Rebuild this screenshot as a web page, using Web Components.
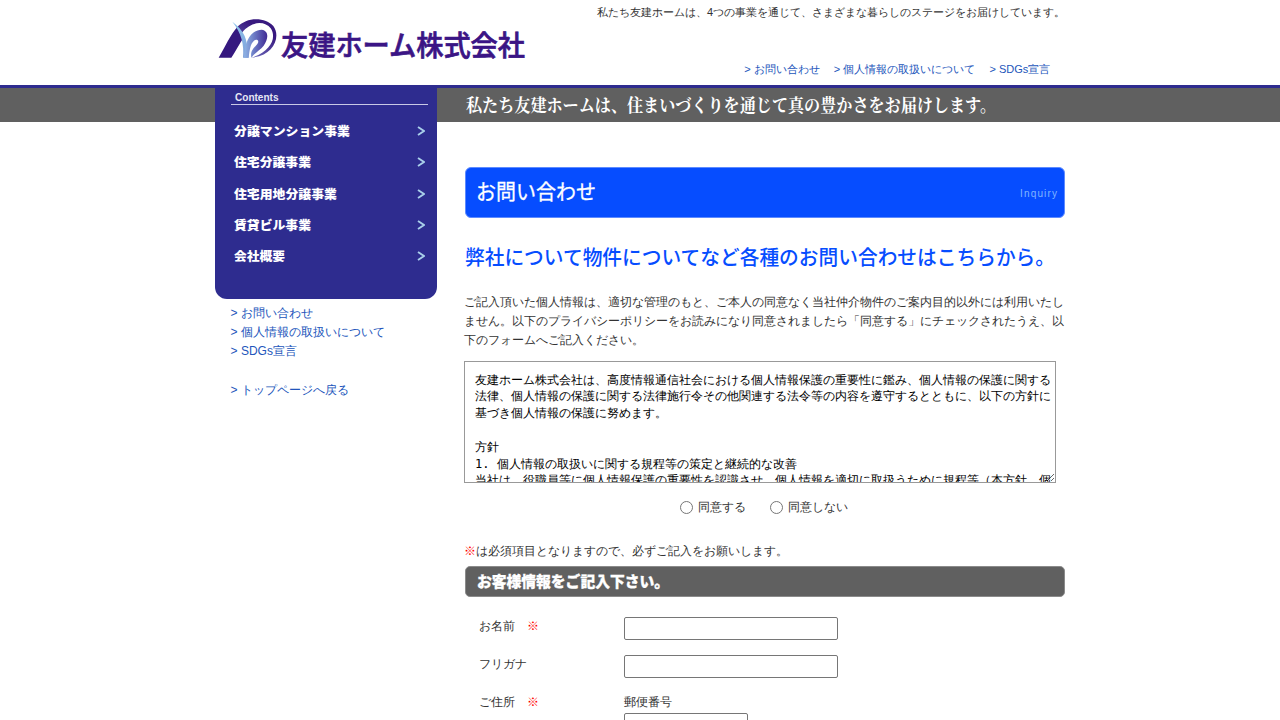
<!DOCTYPE html>
<html lang="ja">
<head>
<meta charset="utf-8">
<title>お問い合わせ | 友建ホーム株式会社</title>
<style>
body{margin:0;background:#fff;color:#333;font:12px/1.6 "Liberation Sans",sans-serif;height:720px;overflow:hidden}
</style>
</head>
<body>
<yk-page></yk-page>
<script>
const define=(name,html)=>customElements.define(name,class extends HTMLElement{
  connectedCallback(){
    if(this.shadowRoot)return;
    const t=document.createElement('template');
    t.innerHTML=typeof html==='function'?html(this):html;
    this.attachShadow({mode:'open'}).append(t.content.cloneNode(true));
  }
});

/* A line of display type set to an exact measure. */
define('fit-text',el=>{
  const a=n=>el.getAttribute(n);
  return `<style>:host{display:block;height:${a('h')}px}svg{display:block;overflow:visible}</style>
  <svg width="${a('w')}" height="${a('h')}"><text x="0" y="${a('base')}" font-family='${a('face')||'"Noto Sans CJK JP",sans-serif'}' font-size="${a('size')}" font-weight="${a('weight')||400}" fill="${a('color')||'#fff'}" stroke="${a('color')||'#fff'}" stroke-width="${a('stroke')||0}" textLength="${a('w')}" lengthAdjust="${a('adjust')||'spacingAndGlyphs'}">${el.getAttribute('text')}</text></svg>`;
});

define('yk-logo',`<style>:host{display:flex;width:310px;height:48px}svg{display:block;flex:none}fit-text{margin:14px 0 0 -1.5px}</style>
<svg width="68" height="48" viewBox="0 0 204 144">
<defs><linearGradient id="a" x1="0" x2="1"><stop offset="0" stop-color="#8fb4e4"/><stop offset=".4" stop-color="#6f80c8"/><stop offset="1" stop-color="#3f2a94"/></linearGradient>
<linearGradient id="b" x1="0" y1="0" x2="0" y2="1"><stop offset="0" stop-color="#8cc3ec"/><stop offset="1" stop-color="#7f9fd8"/></linearGradient>
<linearGradient id="c" x1="0" x2=".6" y1="1" y2="0"><stop offset="0" stop-color="#7a80cc"/><stop offset=".8" stop-color="#38197f"/></linearGradient></defs>
<path fill="#35187f" d="M14 131 C34 98 50 60 70 39 L90 70 C76 90 65 112 52 131Z"/>
<path fill="url(#c)" d="M68 41 C102 4 156 12 178 36 C202 68 178 126 112 131 C168 114 190 72 170 43 C154 22 114 18 84 56Z"/>
<path fill="url(#b)" d="M55 23 C78 40 93 60 97 82 C101 98 100 114 104 131 L87 131 C91 92 82 56 55 23Z"/>
<path fill="url(#a)" d="M90 131 C93 76 112 48 143 47 C166 50 163 76 149 95 C138 109 122 116 112 131 C108 110 120 102 130 90 C138 79 127 74 120 80 C108 90 107 110 104 131Z"/>
</svg>
<fit-text text="友建ホーム株式会社" w="244" h="34" base="27.6" size="28.5" weight="500" stroke=".7" color="#3b1585"></fit-text>`);

define('nav-link',`<style>:host{display:block;color:#2255bb}a{color:inherit;text-decoration:none}</style><a>&gt; <slot></slot></a>`);

define('site-header',`<style>:host{display:flex;justify-content:space-between;width:850px;height:85px;margin:0 auto;font-size:11px}
yk-logo{margin:14px 0 0 -1px}.r{display:flex;flex-direction:column;align-items:flex-end;justify-content:space-between;padding:4px 0 6px}
p{margin:0;white-space:nowrap}nav{display:flex;gap:14.2px;margin-right:14.7px}</style>
<yk-logo></yk-logo><div class="r"><p>私たち友建ホームは、4つの事業を通じて、さまざまな暮らしのステージをお届けしています。</p>
<nav><nav-link>お問い合わせ</nav-link><nav-link>個人情報の取扱いについて</nav-link><nav-link>SDGs宣言</nav-link></nav></div>`);

define('menu-item',el=>`<style>:host{display:flex;justify-content:space-between;align-items:center;height:31.3px;padding:0 12px 0 19px}svg{display:block}</style>
<fit-text text="${el.getAttribute('text')}" w="${el.getAttribute('w')}" h="14" base="11.7" size="12" weight="900"></fit-text>
<svg width="8" height="10" fill="none" stroke="#a9cfea" stroke-width="1.9"><path d="M1 1 7 5 1 9"/></svg>`);

define('side-menu',`<style>:host{display:block;width:222px}.box{height:214px;background:#2e2c8f;border-radius:0 0 12px 12px;box-sizing:border-box;padding-top:8px}
.t{margin:0 9px 10.3px 16px;height:11px;border-bottom:1px solid #c9c9e6;padding-left:3.5px}
.links{padding:5px 0 0 15.6px}nav-link:last-child{margin-top:19.6px}</style>
<div class="box"><div class="t"><fit-text text="Contents" w="43.5" h="11" base="8.4" size="10" weight="700" color="#e6e6f4" face="Liberation Sans"></fit-text></div>
<menu-item text="分譲マンション事業" w="116"></menu-item><menu-item text="住宅分譲事業" w="77"></menu-item><menu-item text="住宅用地分譲事業" w="103"></menu-item><menu-item text="賃貸ビル事業" w="77"></menu-item><menu-item text="会社概要" w="51"></menu-item></div>
<div class="links"><nav-link>お問い合わせ</nav-link><nav-link>個人情報の取扱いについて</nav-link><nav-link>SDGs宣言</nav-link><nav-link>トップページへ戻る</nav-link></div>`);

define('page-title',`<style>:host{display:flex;justify-content:space-between;box-sizing:border-box;height:51px;border:1px solid #5e8bff;border-radius:6px;background:#064dff;padding:0 7px 0 10.5px}
fit-text{margin-top:9px}fit-text+fit-text{margin-top:19px}</style>
<fit-text text="お問い合わせ" w="120" h="30" base="22" size="21" stroke=".3"></fit-text><fit-text text="Inquiry" w="37" h="14" base="10" size="10" color="#80b5ff" adjust="spacing" face="Liberation Sans"></fit-text>`);

define('section-bar',`<style>:host{display:block;box-sizing:border-box;height:31px;border:1px solid #8b8b8b;border-radius:5px;background:#606060;padding:5px 0 0 11px}</style>
<fit-text text="お客様情報をご記入下さい。" w="192" h="20" base="15.3" size="15" weight="900" stroke=".3"></fit-text>`);

define('privacy-consent',`<style>:host{display:block}textarea{display:block;box-sizing:border-box;width:592px;height:122px;margin:0;padding:10px 4px 10px 10px;border:1px solid #999;border-radius:0;font:12px/1.4 "DejaVu Sans Mono",monospace;color:#000;background:#fff;overflow:hidden}
div{display:flex;justify-content:center;gap:24px;margin:15px 2px 0 0}label{display:flex;align-items:center}input{margin:0 5px 0 0;width:13px;height:13px}</style>
<textarea>友建ホーム株式会社は、高度情報通信社会における個人情報保護の重要性に鑑み、個人情報の保護に関する法律、個人情報の保護に関する法律施行令その他関連する法令等の内容を遵守するとともに、以下の方針に基づき個人情報の保護に努めます。

方針
1. 個人情報の取扱いに関する規程等の策定と継続的な改善
当社は、役職員等に個人情報保護の重要性を認識させ、個人情報を適切に取扱うために規程等（本方針、個人情報</textarea>
<div><label><input type="radio" name="agree">同意する</label><label><input type="radio" name="agree">同意しない</label></div>`);

define('form-row',el=>`<style>:host{display:flex;height:38px;padding-left:15px}.l{width:145px}i{font-style:normal;color:#f00;margin-left:12px}
input{display:block;box-sizing:border-box;width:214px;height:23px;margin:0;border:1px solid #767676;border-radius:2px}:host([zip]) input{width:124px;margin-top:1px}</style>
<div class="l"><slot></slot>${el.hasAttribute('required')?'<i>※</i>':''}</div><div>${el.hasAttribute('zip')?'郵便番号':''}<input></div>`);

define('main-content',`<style>:host{display:block;width:601px;margin-left:27px}
.slogan{height:34px;margin-top:3px}.slogan fit-text{padding:5px 0 0 2px}page-title{margin:45px 0 0 .5px}section-bar{margin-left:.5px}.lead{margin:26px 0 0 1.3px}
p{margin:22px 0 10px}.n{margin:25px 0 5px}.n b{font-weight:400;color:#f00}.f{margin-top:20px}</style>
<div class="slogan"><fit-text text="私たち友建ホームは、住まいづくりを通じて真の豊かさをお届けします。" w="530" h="24" base="18.8" size="18" weight="700" face='"Noto Serif CJK JP","Liberation Serif",serif'></fit-text></div>
<page-title></page-title>
<fit-text class="lead" text="弊社について物件についてなど各種のお問い合わせはこちらから。" w="590" h="27" base="21" size="20.8" weight="500" color="#064dff"></fit-text>
<p>ご記入頂いた個人情報は、適切な管理のもと、ご本人の同意なく当社仲介物件のご案内目的以外には利用いたしません。以下のプライバシーポリシーをお読みになり同意されましたら「同意する」にチェックされたうえ、以下のフォームへご記入ください。</p>
<privacy-consent></privacy-consent>
<p class="n"><b>※</b>は必須項目となりますので、必ずご記入をお願いします。</p>
<section-bar></section-bar>
<div class="f"><form-row required>お名前</form-row><form-row>フリガナ</form-row><form-row required zip>ご住所</form-row></div>`);

define('yk-page',`<style>:host{display:block;height:720px;overflow:hidden}.band{background:linear-gradient(#2e2c8f 3px,#606060 3px,#606060 37px,transparent 37px)}
.w{display:flex;width:850px;margin:0 auto;height:635px}side-menu,main-content{flex:none}</style>
<site-header></site-header><div class="band"><div class="w"><side-menu></side-menu><main-content></main-content></div></div>`);
</script>
</body>
</html>
